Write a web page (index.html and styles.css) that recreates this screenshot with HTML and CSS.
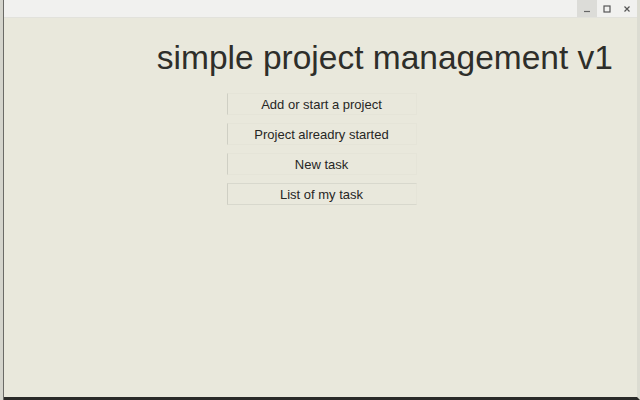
FILE: index.html
```html
<!DOCTYPE html>
<html lang="en">
  <head>
    <meta charset="UTF-8" />
    <title>simple project management v1</title>
    <link rel="stylesheet" href="styles.css">
  </head>
  <body>
    <div class="desktop">
      <div class="behind"></div>
      <div class="window">
        <div class="titlebar">
          <div class="controls">
            <span class="ctl ctl-min">
              <svg width="8" height="8" viewBox="0 0 8 8"><path d="M1 6.5h6" stroke="#666" stroke-width="1.2"/></svg>
            </span>
            <span class="ctl">
              <svg width="8" height="8" viewBox="0 0 8 8"><rect x="1" y="1" width="6" height="6" fill="none" stroke="#555" stroke-width="1.2"/></svg>
            </span>
            <span class="ctl">
              <svg width="8" height="8" viewBox="0 0 8 8"><path d="M1.5 1.5l5 5M6.5 1.5l-5 5" stroke="#555" stroke-width="1.2"/></svg>
            </span>
          </div>
        </div>
        <div class="content">
          <h1 class="app-title">simple project management v1</h1>
          <div class="menu">
            <button class="menu-btn">Add or start a project</button>
            <button class="menu-btn">Project alreadry started</button>
            <button class="menu-btn">New task</button>
            <button class="menu-btn focused">List of my task</button>
          </div>
        </div>
      </div>
    </div>
  </body>
</html>
```

FILE: styles.css
```css
html, body {
  margin: 0;
  padding: 0;
  width: 640px;
  height: 400px;
  overflow: hidden;
  font-family: "Liberation Sans", Arial, sans-serif;
}
.desktop {
  display: flex;
  width: 640px;
  height: 400px;
  background: #3a3a38;
}
/* sliver of the window underneath */
.behind {
  width: 3px;
  background: #d4d4cc;
  border-right: 1px solid #6a6a66;
}
.window {
  flex: 1;
  display: flex;
  flex-direction: column;
  background: #e9e8dc;
  border-right: 3px solid #dcdcd2;
  border-bottom: 3px solid #2a2a28;
}
.titlebar {
  height: 17px;
  background: #f1f1ef;
  border-bottom: 1px solid #e2e2dc;
  display: flex;
  justify-content: flex-end;
}
.controls {
  display: flex;
}
.ctl {
  width: 20px;
  height: 17px;
  display: flex;
  align-items: center;
  justify-content: center;
}
.ctl-min {
  background: #dcdcd8;
}
.content {
  flex: 1;
  display: flex;
  flex-direction: column;
  align-items: center;
}
.app-title {
  align-self: flex-end;
  margin: 21px 24px 0 0;
  font-weight: normal;
  font-size: 33.5px;
  line-height: 38px;
  color: #2e2e2a;
}
.menu {
  display: flex;
  flex-direction: column;
  gap: 8px;
  margin-top: 16px;
  margin-left: 2px;
}
.menu-btn {
  width: 190px;
  height: 22px;
  padding: 0;
  background: #e9e8dc;
  border: 1px solid #e5e4d8;
  border-left-color: #cfcfc4;
  font-family: "Liberation Sans", Arial, sans-serif;
  font-size: 13px;
  color: #262624;
}
.menu-btn.focused {
  border-top-color: #d8d8cd;
  border-bottom-color: #d8d8cd;
}
```
